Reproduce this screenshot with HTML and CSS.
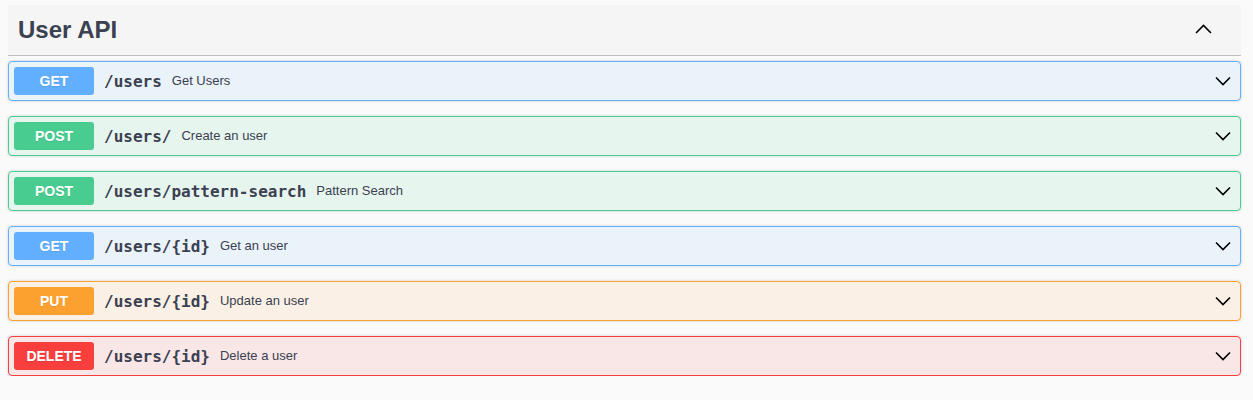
FILE: index.html
```html
<!DOCTYPE html>
<html>
<head>
<meta charset="utf-8">
<link rel="stylesheet" href="styles.css">
</head>
<body>
<div class="wrap">
  <div class="tag">
    <h3 class="tag-title">User API</h3>
    <svg class="tag-arrow" width="17" height="11" viewBox="0 0 17 11"><polyline points="1,10 8.5,2.5 16,10" fill="none" stroke="#000" stroke-width="1.6"/></svg>
  </div>
  <div class="ops">
    <div class="op get">
      <span class="method">GET</span>
      <span class="path">/users</span>
      <span class="desc">Get Users</span>
      <svg class="arrow" width="16" height="10" viewBox="0 0 16 10"><polyline points="1,1.5 8,8.5 15,1.5" fill="none" stroke="#000" stroke-width="1.6"/></svg>
    </div>
    <div class="op post">
      <span class="method">POST</span>
      <span class="path">/users/</span>
      <span class="desc">Create an user</span>
      <svg class="arrow" width="16" height="10" viewBox="0 0 16 10"><polyline points="1,1.5 8,8.5 15,1.5" fill="none" stroke="#000" stroke-width="1.6"/></svg>
    </div>
    <div class="op post">
      <span class="method">POST</span>
      <span class="path">/users/pattern-search</span>
      <span class="desc">Pattern Search</span>
      <svg class="arrow" width="16" height="10" viewBox="0 0 16 10"><polyline points="1,1.5 8,8.5 15,1.5" fill="none" stroke="#000" stroke-width="1.6"/></svg>
    </div>
    <div class="op get">
      <span class="method">GET</span>
      <span class="path">/users/{id}</span>
      <span class="desc">Get an user</span>
      <svg class="arrow" width="16" height="10" viewBox="0 0 16 10"><polyline points="1,1.5 8,8.5 15,1.5" fill="none" stroke="#000" stroke-width="1.6"/></svg>
    </div>
    <div class="op put">
      <span class="method">PUT</span>
      <span class="path">/users/{id}</span>
      <span class="desc">Update an user</span>
      <svg class="arrow" width="16" height="10" viewBox="0 0 16 10"><polyline points="1,1.5 8,8.5 15,1.5" fill="none" stroke="#000" stroke-width="1.6"/></svg>
    </div>
    <div class="op delete">
      <span class="method">DELETE</span>
      <span class="path">/users/{id}</span>
      <span class="desc">Delete a user</span>
      <svg class="arrow" width="16" height="10" viewBox="0 0 16 10"><polyline points="1,1.5 8,8.5 15,1.5" fill="none" stroke="#000" stroke-width="1.6"/></svg>
    </div>
  </div>
</div>
</body>
</html>
```

FILE: styles.css
```css
html, body {
  margin: 0;
  padding: 0;
  background: #fafafa;
  font-family: "Liberation Sans", Arial, sans-serif;
  color: #3b4151;
}
.wrap {
  padding: 5px 12px 0 8px;
}
.tag {
  display: flex;
  align-items: center;
  height: 50px;
  padding: 0 0 0 10px;
  background: rgba(0, 0, 0, 0.02);
  border-bottom: 1px solid rgba(59, 65, 81, 0.3);
  margin-bottom: 5px;
}
.tag-title {
  margin: 0;
  flex: 1;
  font-size: 24px;
  font-weight: bold;
  color: #3b4151;
}
.tag-arrow {
  margin-right: 29px;
  margin-top: -4px;
}
.ops {
  display: flex;
  flex-direction: column;
  gap: 15px;
}
.op {
  display: flex;
  align-items: center;
  height: 28px;
  padding: 5px;
  border: 1px solid;
  border-radius: 4px;
  box-shadow: 0 0 3px rgba(0, 0, 0, 0.19);
}
.method {
  width: 80px;
  height: 28px;
  line-height: 28px;
  text-align: center;
  border-radius: 3px;
  color: #fff;
  font-size: 14px;
  font-weight: bold;
  text-shadow: 0 1px 0 rgba(0, 0, 0, 0.1);
  flex: none;
}
.path {
  padding: 0 10px;
  font-family: "DejaVu Sans Mono", monospace;
  font-weight: bold;
  font-size: 16px;
  color: #3b4151;
}
.desc {
  flex: 1;
  font-size: 13px;
  color: #3b4151;
  padding-bottom: 2px;
}
.arrow {
  margin-right: 4px;
}
.get { background: rgba(97, 175, 254, 0.1); border-color: #61affe; }
.get .method { background: #61affe; }
.post { background: rgba(73, 204, 144, 0.1); border-color: #49cc90; }
.post .method { background: #49cc90; }
.put { background: rgba(252, 161, 48, 0.1); border-color: #fca130; }
.put .method { background: #fca130; }
.delete { background: rgba(249, 62, 62, 0.1); border-color: #f93e3e; }
.delete .method { background: #f93e3e; }
```
